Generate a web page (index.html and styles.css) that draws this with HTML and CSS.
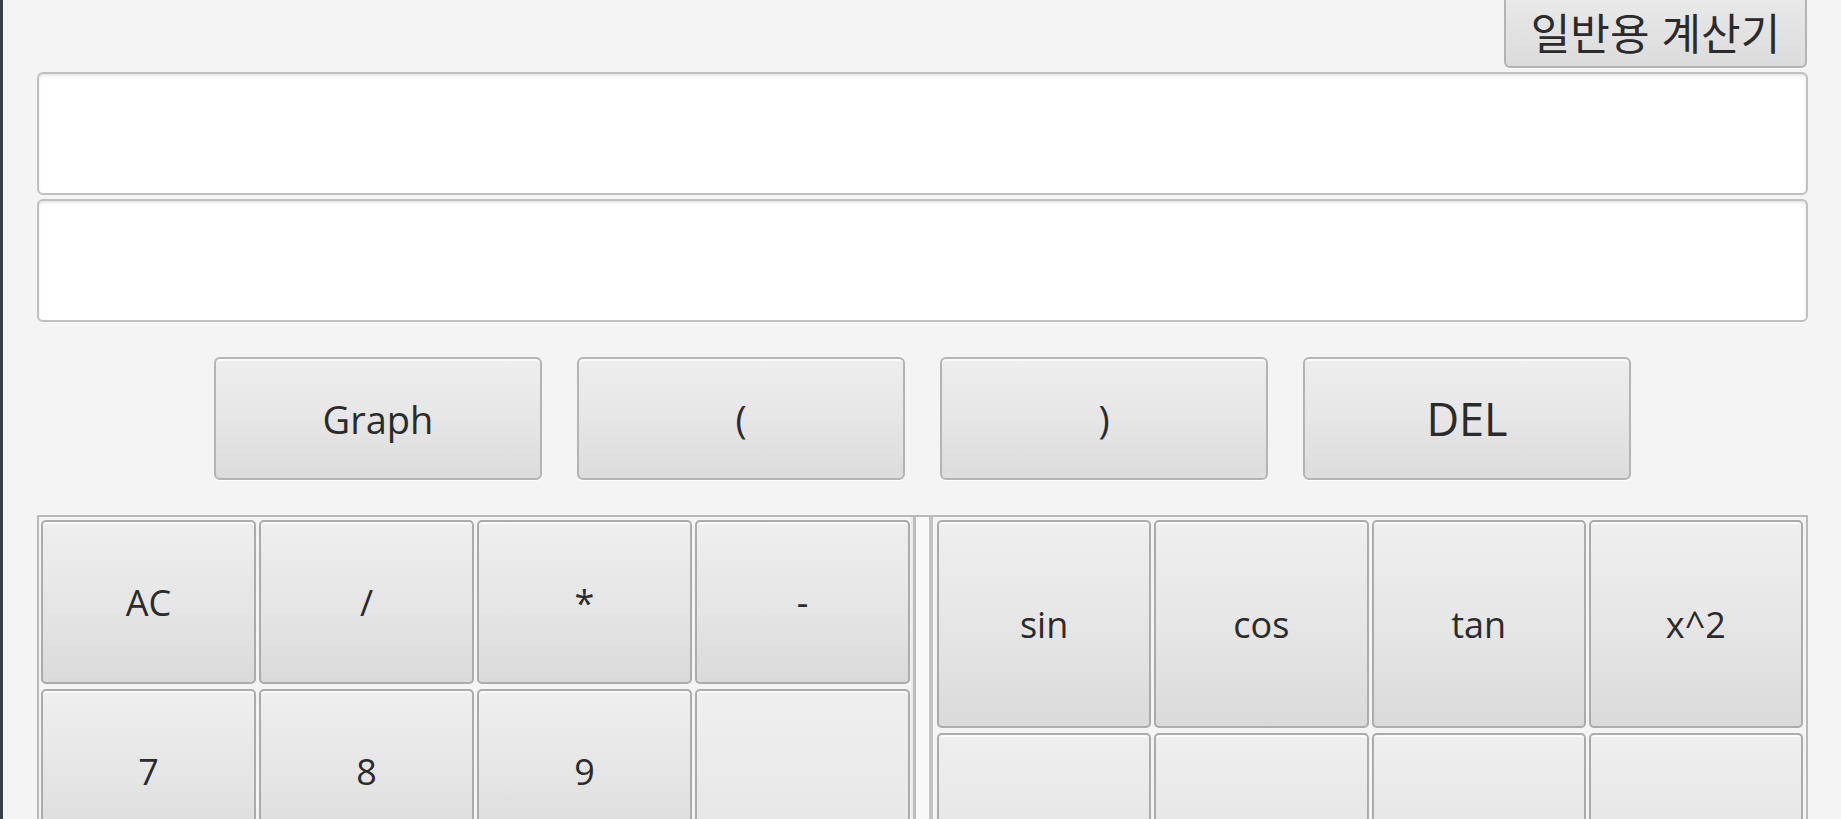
FILE: index.html
```html
<!DOCTYPE html>
<html lang="ko">
<head>
<meta charset="utf-8">
<title>계산기</title>
<link rel="stylesheet" href="styles.css">
</head>
<body>
<div class="window">
  <div class="app">
    <div class="topbar">
      <button class="btn mode">일반용 계산기</button>
    </div>
    <div class="field"></div>
    <div class="field"></div>
    <div class="funcs">
      <button class="btn func">Graph</button>
      <button class="btn func">(</button>
      <button class="btn func">)</button>
      <button class="btn func del">DEL</button>
    </div>
    <div class="split">
      <div class="pane left">
        <button class="key">AC</button>
        <button class="key">/</button>
        <button class="key">*</button>
        <button class="key">-</button>
        <button class="key">7</button>
        <button class="key">8</button>
        <button class="key">9</button>
        <button class="key tall"></button>
      </div>
      <div class="divider"></div>
      <div class="pane right">
        <button class="key">sin</button>
        <button class="key">cos</button>
        <button class="key">tan</button>
        <button class="key">x^2</button>
        <button class="key"></button>
        <button class="key"></button>
        <button class="key"></button>
        <button class="key"></button>
      </div>
    </div>
  </div>
</div>
</body>
</html>
```
FILE: styles.css
```css
html, body {
  margin: 0;
  padding: 0;
  height: 819px;
  overflow: hidden;
  background: #f4f4f4;
}

.window {
  height: 819px;
  border-left: 3px solid #3a3e44;
  box-sizing: border-box;
  overflow: hidden;
}

.app {
  padding: 0 33px 0 34px;
  font-family: "Open Sans", "Noto Sans CJK KR", sans-serif;
  color: #2b2b2b;
}

.btn {
  box-sizing: border-box;
  border: 2px solid #b4b4b4;
  border-radius: 6px;
  background: linear-gradient(to bottom, #eeeeee 0%, #e6e6e6 50%, #dcdcdc 100%);
  box-shadow: inset 0 2px 0 rgba(255, 255, 255, 0.75), 0 1px 0 rgba(255, 255, 255, 0.8);
  font-family: "Open Sans", "Noto Sans CJK KR", sans-serif;
  color: #2b2b2b;
  padding: 0;
  margin: 0;
}

.topbar {
  display: flex;
  justify-content: flex-end;
}

/* the window top cuts this button, so it has no top edge */
.mode {
  width: 303px;
  height: 68px;
  margin-right: 1px;
  border-top: none;
  border-radius: 0 0 6px 6px;
  box-shadow: 0 1px 0 rgba(255, 255, 255, 0.8);
  background: linear-gradient(to bottom, #e9e9e9 0%, #e3e3e3 40%, #dcdcdc 100%);
  font-family: "Noto Sans CJK KR", sans-serif;
  font-size: 43px;
  line-height: 1;
  padding: 0 0 3px 0;
}

.field {
  box-sizing: border-box;
  height: 123px;
  margin-top: 4px;
  background: #ffffff;
  border: 2px solid #c0c0c0;
  border-radius: 6px;
  box-shadow: inset 0 2px 3px rgba(0, 0, 0, 0.10);
}

.funcs {
  display: flex;
  justify-content: center;
  gap: 35px;
  margin-top: 35px;
}

.func {
  width: 328px;
  height: 123px;
  font-size: 38px;
}

.func.del {
  font-size: 45px;
}

.split {
  display: flex;
  margin-top: 35px;
  border: 2px solid #b9b9b9;
  border-bottom: none;
  border-radius: 2px 2px 0 0;
  height: 420px;
}

.pane {
  display: grid;
  grid-template-columns: repeat(4, 1fr);
  column-gap: 3px;
  row-gap: 5px;
  align-content: start;
  overflow: hidden;
}

.pane.left {
  flex: 0 0 872px;
  box-sizing: border-box;
  padding: 3px 1px 0 2px;
  grid-auto-rows: 164px;
}

.pane.right {
  flex: 1;
  box-sizing: border-box;
  padding: 3px 3px 0 4px;
  grid-auto-rows: 208px;
}

.divider {
  flex: 0 0 22px;
  background: linear-gradient(to right,
    #ececec 0, #ececec 2px,
    #bcbcbc 2px, #bcbcbc 5px,
    #f8f8f8 5px, #f8f8f8 18px,
    #c2c2c2 18px, #c2c2c2 22px);
}

.key {
  box-sizing: border-box;
  border: 2px solid #ababab;
  border-radius: 5px;
  background: linear-gradient(to bottom, #efefef 0%, #e5e5e5 55%, #dadada 100%);
  box-shadow: inset 0 2px 0 rgba(255, 255, 255, 0.7);
  font-family: "Open Sans", sans-serif;
  font-size: 36px;
  color: #2b2b2b;
  padding: 0;
  margin: 0;
}

.key.tall {
  grid-row: span 2;
}
```
